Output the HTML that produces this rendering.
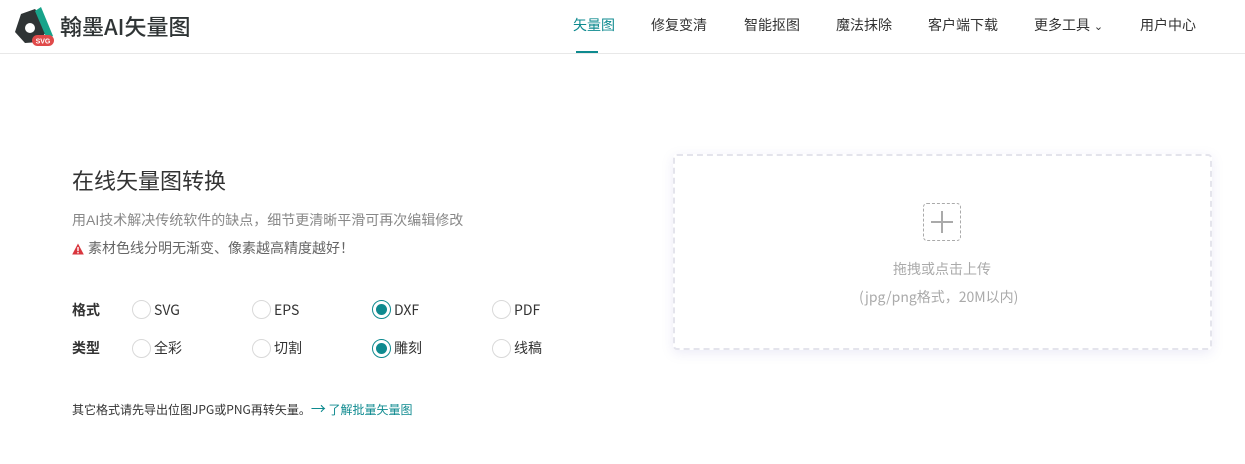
<!DOCTYPE html>
<html><head><meta charset="utf-8"><style>
*{margin:0;padding:0;box-sizing:border-box}
body{width:1245px;height:464px;background:#fff;font-family:"Liberation Sans","Noto Sans CJK SC",sans-serif;position:relative;overflow:hidden;color:#333}
.a{position:absolute;white-space:nowrap;line-height:20px}
.hdr{position:absolute;left:0;top:0;width:1245px;height:54px;border-bottom:1px solid #e8e8e8}
.nav{font-size:14px;top:15px;color:#333}
.r{position:absolute;width:19px;height:19px;border:1px solid #d9d9d9;border-radius:50%;background:#fff}
.r.on{border-color:#0e8a8f}
.r.on:after{content:"";position:absolute;left:3px;top:3px;width:11px;height:11px;border-radius:50%;background:#0e8a8f}
.lb{font-size:14px;color:#333;font-family:"Noto Sans CJK SC",sans-serif}
</style></head><body>
<div class="hdr"></div>
<svg class="a" style="left:12px;top:5px" width="44" height="44" viewBox="0 0 44 44">
<path d="M9 9 L23 4 L31 13 L34 27 L27 37 L13 38 L3 27 Z" fill="#2f3435"/>
<circle cx="18" cy="23" r="5" fill="#fff"/>
<path d="M23 6 L29 2 L41 31 L35 34 Z" fill="#17a38a"/>
<rect x="20" y="30" width="22" height="11" rx="5.5" fill="#e04a4a"/>
<text x="31" y="38.5" font-size="7" fill="#fff" text-anchor="middle" font-family="Liberation Sans" font-weight="bold">SVG</text>
</svg>
<div class="a" style="left:60px;top:13px;font-size:22px;line-height:26px;color:#2f3435;font-family:'Noto Sans CJK SC',sans-serif;font-weight:500">翰墨AI矢量图</div>
<div class="a nav" style="left:573px;color:#0e8a8f">矢量图</div>
<div class="a" style="left:576px;top:51px;width:22px;height:2px;background:#0e8a8f"></div>
<div class="a nav" style="left:651px">修复变清</div>
<div class="a nav" style="left:744px">智能抠图</div>
<div class="a nav" style="left:836px">魔法抹除</div>
<div class="a nav" style="left:928px">客户端下载</div>
<div class="a nav" style="left:1034px">更多工具 <span style="font-size:11px">&#8964;</span></div>
<div class="a nav" style="left:1140px">用户中心</div>

<div class="a" style="left:72px;top:169px;font-size:22px;line-height:26px;color:#333">在线矢量图转换</div>
<div class="a" style="left:72px;top:210px;font-size:14px;color:#888">用AI技术解决传统软件的缺点，细节更清晰平滑可再次编辑修改</div>
<svg class="a" style="left:72px;top:243px" width="12" height="12" viewBox="0 0 12 12"><path d="M6 0.5 L11.8 11.5 H0.2 Z" fill="#d9363e"/><rect x="5.3" y="4" width="1.4" height="4.2" fill="#fff"/><rect x="5.3" y="9" width="1.4" height="1.4" fill="#fff"/></svg>
<div class="a" style="left:88px;top:238px;font-size:14px;color:#666">素材色线分明无渐变、像素越高精度越好！</div>

<div class="a lb" style="left:72px;top:300px;font-weight:bold">格式</div>
<div class="r" style="left:132px;top:300px"></div><div class="a lb" style="left:154px;top:300px">SVG</div>
<div class="r" style="left:252px;top:300px"></div><div class="a lb" style="left:274px;top:300px">EPS</div>
<div class="r on" style="left:372px;top:300px"></div><div class="a lb" style="left:394px;top:300px">DXF</div>
<div class="r" style="left:492px;top:300px"></div><div class="a lb" style="left:514px;top:300px">PDF</div>
<div class="a lb" style="left:72px;top:338px;font-weight:bold">类型</div>
<div class="r" style="left:132px;top:339px"></div><div class="a lb" style="left:154px;top:338px">全彩</div>
<div class="r" style="left:252px;top:339px"></div><div class="a lb" style="left:274px;top:338px">切割</div>
<div class="r on" style="left:372px;top:339px"></div><div class="a lb" style="left:394px;top:338px">雕刻</div>
<div class="r" style="left:492px;top:339px"></div><div class="a lb" style="left:514px;top:338px">线稿</div>
<div class="a" style="left:72px;top:399px;font-size:12px;color:#333;font-family:'Noto Sans CJK SC',sans-serif">其它格式请先导出位图JPG或PNG再转矢量。<span style="color:#0e8a8f"><span style="font-size:15px">→</span> 了解批量矢量图</span></div>

<div class="a" style="left:673px;top:154px;width:539px;height:196px;border:2px dashed #e4e4ec;border-radius:4px;box-shadow:0 3px 12px rgba(120,110,200,0.14)"></div>
<div class="a" style="left:923px;top:203px;width:38px;height:38px;border:1.5px dashed #aaa;border-radius:4px"></div>
<div class="a" style="left:931px;top:221px;width:22px;height:1.5px;background:#aaa"></div>
<div class="a" style="left:941px;top:211px;width:1.5px;height:22px;background:#aaa"></div>
<div class="a" style="left:893px;top:259px;font-size:14px;color:#aaa">拖拽或点击上传</div>
<div class="a" style="left:859px;top:287px;font-size:14px;color:#aaa;font-family:'Noto Sans CJK SC',sans-serif">(jpg/png格式，20M以内)</div>
</body></html>
